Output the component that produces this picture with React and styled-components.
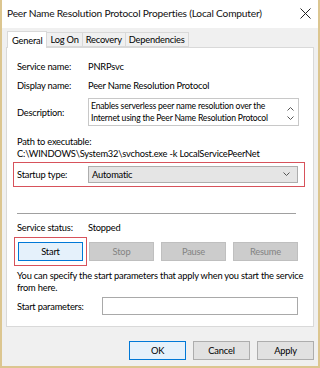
import React from "react";
import styled, { createGlobalStyle } from "styled-components";

const Global = createGlobalStyle`
  html, body { margin: 0; padding: 0; background: #f0f0f0; }
  body { font-family: Lato, "Liberation Sans", Arial, sans-serif; color: #000; }
  * { box-sizing: border-box; }
`;

const Window = styled.div`
  width: 320px;
  height: 368px;
  background: #f0f0f0;
  border-left: 2px solid #dcc690;
  border-right: 2px solid #dcc690;
  border-bottom: 2px solid #dcc690;
  display: flex;
  flex-direction: column;
  white-space: nowrap;
  letter-spacing: -0.2px;
`;

const TitleBar = styled.div`
  height: 28px;
  background: #fff;
  display: flex;
  align-items: center;
  justify-content: space-between;
  padding: 0 7px 2px 5px;
  font-size: 10.2px;
  color: #111;
`;

const TabStrip = styled.div`
  height: 19px;
  display: flex;
  align-items: flex-end;
  padding-left: 5px;
`;

const Tab = styled.div`
  height: ${(p) => (p.$active ? 17 : 15)}px;
  padding: 0 ${(p) => (p.$active ? 4 : 3)}px;
  margin-bottom: ${(p) => (p.$active ? -1 : 0)}px;
  display: flex;
  align-items: center;
  font-size: 9.3px;
  background: ${(p) => (p.$active ? "#fff" : "#f0f0f0")};
  border: 1px solid #d9d9d9;
  border-bottom: ${(p) => (p.$active ? "none" : "1px solid #d9d9d9")};
  margin-left: ${(p) => (p.$active ? 0 : -1)}px;
  position: relative;
  z-index: ${(p) => (p.$active ? 1 : 0)};
`;

const Panel = styled.div`
  margin: 0 4px;
  height: 280px;
  background: #fff;
  border: 1px solid #d9d9d9;
  padding: 12px 0 0 10px;
  display: flex;
  flex-direction: column;
  font-size: 9.3px;
`;

const Row = styled.div`
  display: flex;
  align-items: center;
  margin-top: ${(p) => p.$mt || 0}px;
  min-height: 12px;
`;

const Label = styled.div`
  width: ${(p) => p.$w || 71}px;
  flex: none;
`;

const Text = styled.div`
  margin-top: ${(p) => p.$mt || 0}px;
  line-height: 12px;
`;

const DescBox = styled.div`
  width: 211px;
  height: 28px;
  border: 1px solid #c8c8c8;
  display: flex;
  line-height: 12px;
  padding: 1px 0 0 2px;
`;

const DescText = styled.div`
  flex: 1;
  font-size: 8.6px;
  line-height: 12px;
`;

const ScrollCol = styled.div`
  width: 15px;
  display: flex;
  flex-direction: column;
  align-items: center;
  justify-content: space-between;
  padding: 6px 0 4px;
`;

const RedBox = styled.div`
  margin-left: -4px;
  width: 292px;
  height: 25px;
  border: 1px solid #d7525b;
  display: flex;
  align-items: center;
  padding-left: 3px;
`;

const Select = styled.div`
  width: 210px;
  height: 17px;
  background: #e5e5e5;
  border: 1px solid #adadad;
  display: flex;
  align-items: center;
  justify-content: space-between;
  padding: 0 7px 0 3px;
`;

const Separator = styled.div`
  width: 279px;
  height: 1px;
  background: #a0a0a0;
  margin-top: 26px;
`;

const ButtonRow = styled.div`
  display: flex;
  align-items: center;
  margin-top: 4px;
  margin-left: -3px;
`;

const StartWrap = styled.div`
  border: 1px solid #d7525b;
  padding: 4px 3px;
  margin-right: 2px;
`;

const Btn = styled.div`
  width: ${(p) => p.$w || 65}px;
  height: 19px;
  display: flex;
  align-items: center;
  justify-content: center;
  font-size: 9.3px;
  margin-right: ${(p) => p.$mr || 0}px;
  background: ${(p) => (p.$disabled ? "#cccccc" : p.$primary ? "#e5f1fb" : "#e1e1e1")};
  border: 1px solid ${(p) => (p.$disabled ? "#bfbfbf" : p.$primary ? "#0078d7" : "#adadad")};
  color: ${(p) => (p.$disabled ? "#838383" : "#000")};
`;

const Input = styled.div`
  width: 196px;
  height: 18px;
  border: 1px solid #a9a9a9;
  background: #fff;
`;

const Footer = styled.div`
  display: flex;
  justify-content: flex-end;
  margin-top: 14px;
  padding-right: 4px;
  gap: 7px;
`;

const Chevron = ({ up }) => (
  <svg width="7" height="5" viewBox="0 0 7 5">
    <path
      d={up ? "M0.5 4.5 L3.5 1.5 L6.5 4.5" : "M0.5 0.5 L3.5 3.5 L6.5 0.5"}
      fill="none"
      stroke="#555"
      strokeWidth="1"
    />
  </svg>
);

const CloseIcon = () => (
  <svg width="11" height="11" viewBox="0 0 11 11">
    <path d="M0.5 0.5 L10.5 10.5 M10.5 0.5 L0.5 10.5" stroke="#222" strokeWidth="1" />
  </svg>
);

export default function App() {
  return (
    <>
      <Global />
      <Window>
        <TitleBar>
          <span>Peer Name Resolution Protocol Properties (Local Computer)</span>
          <CloseIcon />
        </TitleBar>
        <TabStrip>
          <Tab $active>General</Tab>
          <Tab>Log On</Tab>
          <Tab>Recovery</Tab>
          <Tab>Dependencies</Tab>
        </TabStrip>
        <Panel>
          <Row>
            <Label>Service name:</Label>
            <span>PNRPsvc</span>
          </Row>
          <Row $mt={7}>
            <Label>Display name:</Label>
            <span>Peer Name Resolution Protocol</span>
          </Row>
          <Row $mt={7}>
            <Label>Description:</Label>
            <DescBox>
              <DescText>
                Enables serverless peer name resolution over the
                <br />
                Internet using the Peer Name Resolution Protocol
              </DescText>
              <ScrollCol>
                <Chevron up />
                <Chevron />
              </ScrollCol>
            </DescBox>
          </Row>
          <Text $mt={10}>Path to executable:</Text>
          <Text>C:\WINDOWS\System32\svchost.exe -k LocalServicePeerNet</Text>
          <Row $mt={2}>
            <RedBox>
              <Label>Startup type:</Label>
              <Select>
                <span>Automatic</span>
                <Chevron />
              </Select>
            </RedBox>
          </Row>
          <Separator />
          <Row $mt={7}>
            <Label>Service status:</Label>
            <span>Stopped</span>
          </Row>
          <ButtonRow>
            <StartWrap>
              <Btn $primary>Start</Btn>
            </StartWrap>
            <Btn $disabled $mr={7}>Stop</Btn>
            <Btn $disabled $mr={7}>Pause</Btn>
            <Btn $disabled>Resume</Btn>
          </ButtonRow>
          <Text $mt={4}>
            You can specify the start parameters that apply when you start the service
            <br />
            from here.
          </Text>
          <Row $mt={3}>
            <Label $w={85}>Start parameters:</Label>
            <Input />
          </Row>
        </Panel>
        <Footer>
          <Btn $w={57} $primary>OK</Btn>
          <Btn $w={57}>Cancel</Btn>
          <Btn $w={57}>Apply</Btn>
        </Footer>
      </Window>
    </>
  );
}
